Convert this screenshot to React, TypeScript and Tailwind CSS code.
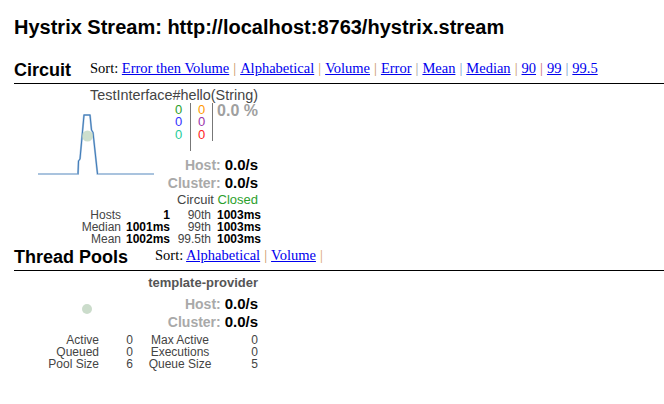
function Sep({ color }: { color: string }) {
  return <span className={`mx-[4px] ${color}`}>|</span>;
}

function SortLinks({ links, seps }: { links: string[]; seps: string[] }) {
  return (
    <div className="text-[14.5px] text-black font-['Liberation_Serif',serif]">
      Sort:{" "}
      {links.map((l, i) => (
        <span key={l + i}>
          <a href="#" className="text-[#0000ee] underline">
            {l}
          </a>
          {i < seps.length && <Sep color={seps[i]} />}
        </span>
      ))}
    </div>
  );
}

function Sparkline() {
  return (
    <svg width="120" height="64" viewBox="0 0 120 64" className="block">
      <polyline
        points="1,61 41,61 41.5,48 43,46 47,2 53,2 54.5,17 56,19.5 60.5,61 117,61"
        fill="none"
        stroke="#a9c3de"
        strokeWidth="2"
      />
      <polyline
        points="41,61 41.5,48 43,46 47,2 53,2 54.5,17 56,19.5 60.5,61"
        fill="none"
        stroke="#3d7ab8"
        strokeWidth="1"
      />
      <circle cx="50.5" cy="23" r="5.5" fill="#bcd4bc" fillOpacity="0.75" />
    </svg>
  );
}

function Rate({ label, value }: { label: string; value: string }) {
  return (
    <div className="text-right leading-[18px]">
      <span className="text-[14px] font-bold text-[#a9a9a9]">{label} </span>
      <span className="text-[15px] font-bold text-black">{value}</span>
    </div>
  );
}

function Header({ title, gap, children }: { title: string; gap: string; children: React.ReactNode }) {
  return (
    <div className={`flex items-end ${gap} border-b-[1.5px] border-black pb-[2px]`}>
      <span className="text-[18px] font-bold text-black leading-[22px]">{title}</span>
      <div className="pb-[1px]">{children}</div>
    </div>
  );
}

export default function App() {
  return (
    <div className="w-[664px] h-[404px] bg-white pl-[14px] pt-[15px] font-['Liberation_Sans',Arial,sans-serif] text-[#333]">
      <h1 className="text-[20px] font-bold text-black leading-[24px]">
        Hystrix Stream: http://localhost:8763/hystrix.stream
      </h1>

      <div className="mt-[19px]">
        <Header title="Circuit" gap="gap-[19px]">
          <SortLinks
            links={["Error then Volume", "Alphabetical", "Volume", "Error", "Mean", "Median", "90", "99", "99.5"]}
            seps={["text-[#c8925a]", "text-[#d9a060]", "text-[#c8925a]", "text-[#9c9c9c]", "text-[#6f96c8]", "text-[#c8925a]", "text-[#c86a6a]", "text-[#6f96c8]"]}
          />
        </Header>
      </div>

      {/* circuit card */}
      <div className="w-[244px] pt-[3px]">
        <div className="text-right text-[14.4px] text-[#444] leading-[16px]">TestInterface#hello(String)</div>
        <div className="flex">
          <div className="w-[130px] pl-[23px] pt-[10px]">
            <Sparkline />
          </div>
          <div className="flex-1">
            <div className="flex justify-end text-[13px] leading-[12.5px]">
              <div className="flex flex-col items-center w-[24px] pt-[1px] pb-[10px] border-r border-[#777]">
                <span className="text-[#2ca02c]">0</span>
                <span className="text-[#3333ff]">0</span>
                <span className="text-[#1fcc9a]">0</span>
              </div>
              <div className="flex flex-col items-center w-[22px] pt-[1px] self-start border-r border-[#777]">
                <span className="text-[#ff9900]">0</span>
                <span className="text-[#9933aa]">0</span>
                <span className="text-[#ff2222]">0</span>
              </div>
              <div className="pl-[4px] text-[16px] font-bold text-[#a0a0a0] leading-[16px]">0.0 %</div>
            </div>
            <div className="mt-[5px]">
              <Rate label="Host:" value="0.0/s" />
              <Rate label="Cluster:" value="0.0/s" />
            </div>
          </div>
        </div>
        <div className="text-right text-[13px] leading-[16px] text-[#444]">
          Circuit <span className="text-[#2ca02c]">Closed</span>
        </div>
        <div className="w-[247px] grid grid-cols-[107px_49px_41px_50px] text-[12px] leading-[12px] text-[#444] mt-[1px]">
          <span className="text-right">Hosts</span>
          <span className="text-right font-bold text-black">1</span>
          <span className="text-right">90th</span>
          <span className="text-right font-bold text-black">1003ms</span>
          <span className="text-right">Median</span>
          <span className="text-right font-bold text-black">1001ms</span>
          <span className="text-right">99th</span>
          <span className="text-right font-bold text-black">1003ms</span>
          <span className="text-right">Mean</span>
          <span className="text-right font-bold text-black">1002ms</span>
          <span className="text-right">99.5th</span>
          <span className="text-right font-bold text-black">1003ms</span>
        </div>
      </div>

      <Header title="Thread Pools" gap="gap-[27px]">
        <SortLinks links={["Alphabetical", "Volume"]} seps={["text-[#c8925a]", "text-[#d9a060]"]} />
      </Header>

      {/* pool card */}
      <div className="w-[244px] pt-[4px]">
        <div className="text-right text-[13px] font-bold text-[#555] leading-[16px]">template-provider</div>
        <div className="flex items-start mt-[4px]">
          <div className="w-[124px] flex justify-center pl-[22px] pt-[9px]">
            <span className="block w-[10px] h-[10px] rounded-full bg-[#cbdccb]" />
          </div>
          <div className="flex-1">
            <Rate label="Host:" value="0.0/s" />
            <Rate label="Cluster:" value="0.0/s" />
          </div>
        </div>
        <div className="grid grid-cols-[85px_34px_94px_31px] text-[12px] leading-[12px] text-[#444] mt-[3px]">
          <span className="text-right">Active</span>
          <span className="text-right">0</span>
          <span className="text-center">Max Active</span>
          <span className="text-right">0</span>
          <span className="text-right">Queued</span>
          <span className="text-right">0</span>
          <span className="text-center">Executions</span>
          <span className="text-right">0</span>
          <span className="text-right">Pool Size</span>
          <span className="text-right">6</span>
          <span className="text-center">Queue Size</span>
          <span className="text-right">5</span>
        </div>
      </div>
    </div>
  );
}
